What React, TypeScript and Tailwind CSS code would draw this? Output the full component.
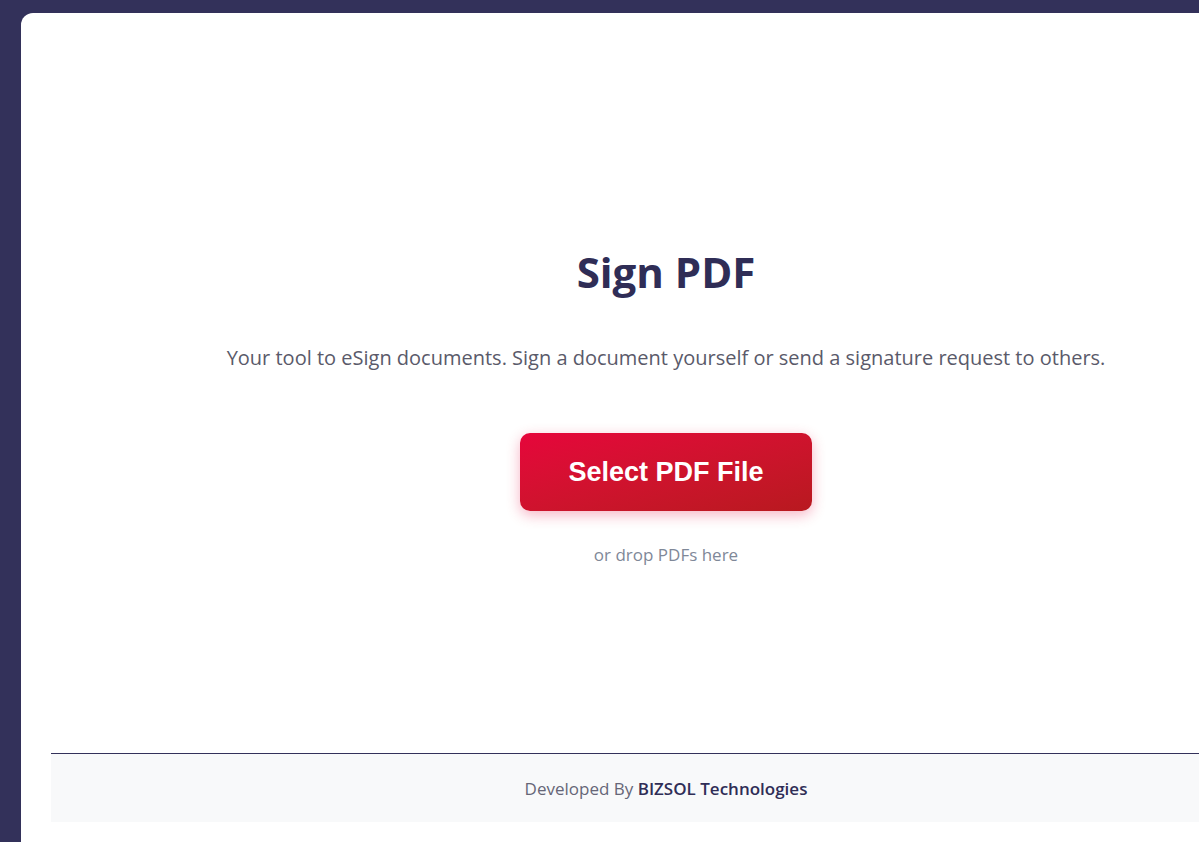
import React from "react";

const App = () => {
  return (
    <div className="h-[842px] w-full overflow-hidden bg-[#33315a] pl-[21px] pt-[13px]">
      {/* panel - start */}
      <div
        className="flex h-[829px] w-[1290px] flex-col rounded-tl-xl bg-white pl-[30px] pb-[20px]"
        style={{ fontFamily: '"Open Sans", "Noto Sans", sans-serif' }}
      >
        <main className="flex w-[1230px] flex-1 flex-col items-center pt-[235px]">
          <h1 className="text-[42px] font-bold leading-[48px] text-[#2f2d56]">Sign PDF</h1>
          <p className="mt-[47px] text-[20px] leading-[30px] text-[#5a5a6a]">
            Your tool to eSign documents. Sign a document yourself or send a signature request to others.
          </p>
          <button
            type="button"
            className="mt-[60px] h-[78px] w-[292px] rounded-[10px] bg-gradient-to-br from-[#e6053b] to-[#b8191f] text-[27px] font-bold text-white shadow-[0_4px_14px_rgba(230,5,59,0.3)]"
            style={{ fontFamily: '"Liberation Sans", Arial, sans-serif' }}
          >
            Select PDF File
          </button>
          <p className="mt-[32px] text-[17px] leading-[24px] text-[#7f8898]">or drop PDFs here</p>
        </main>

        {/* footer - start */}
        <footer className="flex h-[69px] w-[1230px] items-center justify-center border-t border-[#33315a] bg-[#f8f9fa]">
          <p className="pt-[2px] text-[17px] text-[#666677]">
            Developed By <span className="font-semibold text-[#2f2d56]">BIZSOL Technologies</span>
          </p>
        </footer>
        {/* footer - end */}
      </div>
      {/* panel - end */}
    </div>
  );
};

export default App;
